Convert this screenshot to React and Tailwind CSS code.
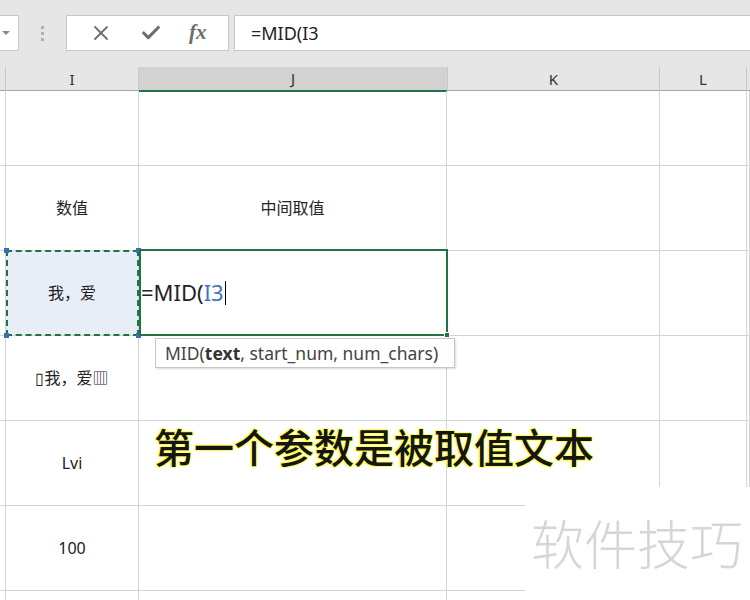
import React from "react";
import { X, Check } from "lucide-react";

const font = { fontFamily: '"Noto Sans", "Noto Sans CJK SC", sans-serif' };

function Cell({ children, className = "" }) {
  return (
    <div
      className={`border-r border-b border-[#d4d4d4] flex items-center justify-center text-[16px] text-[#222] ${className}`}
    >
      {children}
    </div>
  );
}

export default function App() {
  const rows = [
    ["", ""],
    ["数值", "中间取值"],
    ["我，爱", ""],
    ["▯我，爱▥", ""],
    ["Lvi", ""],
    ["100", ""],
    ["", ""],
  ];

  return (
    <div className="relative w-[750px] h-[600px] overflow-hidden bg-white" style={font}>
      {/* Formula bar */}
      <div className="h-[67px] bg-[#e6e6e6] pt-[15px] flex items-start">
        <div className="w-[19px] h-[36px] bg-white border-y border-r border-[#c8c8c8] flex items-center justify-start pl-[2px]">
          <span className="w-0 h-0 border-l-[4px] border-r-[4px] border-t-[4px] border-l-transparent border-r-transparent border-t-[#8a8a8a]" />
        </div>
        <div className="w-[47px] h-[36px] flex flex-col items-center justify-center gap-[3px]">
          <span className="w-[3px] h-[3px] bg-[#b0b0b0]" />
          <span className="w-[3px] h-[3px] bg-[#b0b0b0]" />
          <span className="w-[3px] h-[3px] bg-[#b0b0b0]" />
        </div>
        <div className="w-[163px] h-[36px] bg-white border border-[#c8c8c8] flex items-center justify-around px-[8px] text-[#6e6e6e]">
          <X size={24} strokeWidth={1.8} />
          <Check size={22} strokeWidth={3.4} />
          <span className="italic text-[21px] font-semibold" style={{ fontFamily: '"Liberation Serif", serif' }}>
            fx
          </span>
        </div>
        <div className="ml-[5px] flex-1 h-[36px] bg-white border-y border-l border-[#c8c8c8] flex items-center pl-[16px] text-[18px] text-[#222]">
          =MID(I3
        </div>
      </div>

      {/* Column headers */}
      <div className="grid grid-cols-[6px_133px_308px_213px_87px_1fr] h-[24px] bg-[#e6e6e6] border-b border-[#a6a6a6] text-[15px] text-[#333]">
        <div className="border-r border-[#c8c8c8]" />
        <div className="border-r border-[#c8c8c8] flex items-center justify-center">I</div>
        <div className="bg-[#d2d2d2] border-b-2 border-[#217346] flex items-center justify-center">J</div>
        <div className="border-r border-[#c8c8c8] border-l border-l-[#c8c8c8] flex items-center justify-center">K</div>
        <div className="border-r border-[#c8c8c8] flex items-center justify-center">L</div>
        <div />
      </div>

      {/* Grid */}
      <div className="grid grid-cols-[6px_133px_308px_213px_87px_1fr] grid-rows-[75px_85px_85px_85px_85px_85px_85px]">
        {rows.map((r, i) => (
          <React.Fragment key={i}>
            <Cell />
            <Cell className={i === 2 ? "bg-[#e8eef8]" : ""}>{r[0]}</Cell>
            <Cell>{r[1]}</Cell>
            <Cell />
            <Cell />
            <Cell />
          </React.Fragment>
        ))}
      </div>

      {/* Reference range I3 (dashed) */}
      <div className="absolute left-[6px] top-[250px] w-[133px] h-[86px] border-2 border-dashed border-[#217346]" />
      <span className="absolute left-[4px] top-[248px] w-[5px] h-[5px] bg-[#3c6cc0]" />
      <span className="absolute left-[136px] top-[248px] w-[5px] h-[5px] bg-[#3c6cc0]" />
      <span className="absolute left-[4px] top-[333px] w-[5px] h-[5px] bg-[#3c6cc0]" />
      <span className="absolute left-[136px] top-[333px] w-[5px] h-[5px] bg-[#3c6cc0]" />

      {/* Active cell J3 */}
      <div className="absolute left-[139px] top-[249px] w-[309px] h-[87px] border-2 border-[#217346] bg-white flex items-center text-[22px] text-[#222]">
        <span>=MID(</span>
        <span className="text-[#4472c4]">I3</span>
        <span className="w-[1px] h-[24px] bg-black ml-[1px]" />
      </div>
      <span className="absolute left-[444px] top-[332px] w-[6px] h-[6px] bg-[#217346] border border-white" />

      {/* Tooltip */}
      <div className="absolute left-[155px] top-[338px] w-[300px] h-[30px] px-[9px] bg-white border border-[#c6c6c6] shadow-[1px_1px_2px_rgba(0,0,0,0.15)] flex items-center text-[17.5px] text-[#444]">
        <span className="whitespace-nowrap">
          MID(<b className="text-[#333]">text</b>, start_num, num_chars)
        </span>
      </div>

      {/* Caption */}
      <div
        className="absolute left-[154px] top-[424px] text-[40px] leading-[48px] font-medium text-[#151515] [text-shadow:1px_1px_0_#ffff55,-1px_-1px_0_#ffff55,1px_-1px_0_#ffff55,-1px_1px_0_#ffff55,0_0_2px_#ffff55]"
      >
        第一个参数是被取值文本
      </div>

      {/* Watermark */}
      <div className="absolute left-[525px] top-[487px] w-[225px] h-[113px] bg-white flex items-start pl-[6px] pt-[28px]">
        <span className="text-[53px] leading-[60px] text-[#d6d6d6] font-light">软件技巧</span>
      </div>
    </div>
  );
}
